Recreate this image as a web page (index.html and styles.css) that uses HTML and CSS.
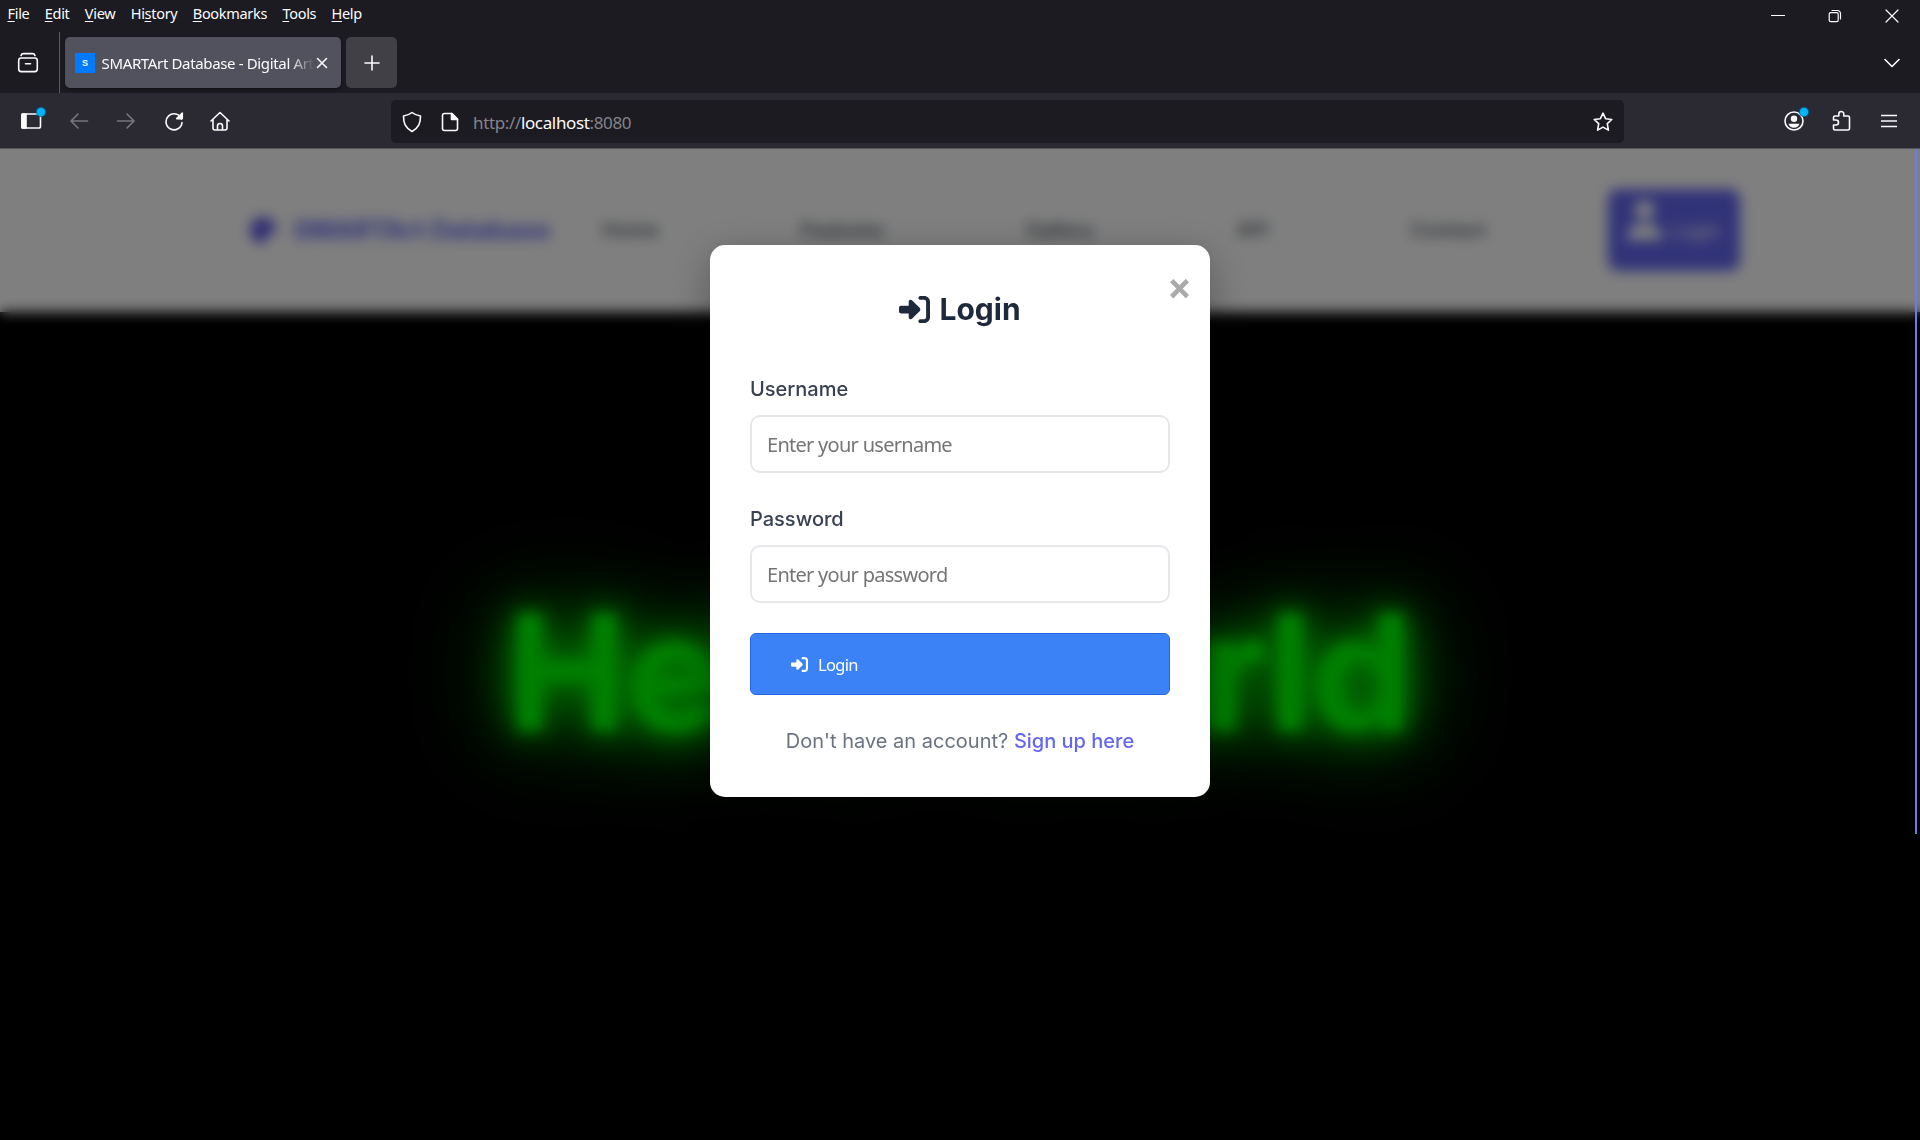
FILE: index.html
```html
<!DOCTYPE html>
<html lang="en">
<head>
<meta charset="utf-8">
<title>SMARTArt Database - Digital Art</title>
<link rel="stylesheet" href="styles.css">
</head>
<body>
<div class="window">
  <div class="menubar">
    <nav class="menus">
      <span><u>F</u>ile</span><span><u>E</u>dit</span><span><u>V</u>iew</span><span>Hi<u>s</u>tory</span><span><u>B</u>ookmarks</span><span><u>T</u>ools</span><span><u>H</u>elp</span>
    </nav>
    <div class="controls">
      <svg width="14" height="14" viewBox="0 0 14 14"><path d="M.5 6.5h13"/></svg>
      <svg width="14" height="14" viewBox="0 0 14 14"><rect x="1.2" y="3.7" width="9" height="9" rx="1.5"/><path d="M4 1.5h5.5a3 3 0 0 1 3 3V10"/></svg>
      <svg width="14" height="14" viewBox="0 0 14 14"><path d="M1 1l12 12M13 1L1 13"/></svg>
    </div>
  </div>
  <div class="tabstrip">
    <div class="archive"><svg width="22" height="22" viewBox="0 0 22 22"><path d="M4 3.5C4.500 2 5.200 1.600 6.500 1.600h9c1.300 0 2 .4 2.500 1.900"/><rect x="1.700" y="6" width="18.600" height="13.600" rx="2.600"/><path d="M8.500 11.700h5"/></svg></div>
    <div class="tab">
      <span class="favicon">S</span>
      <span class="tab-title">SMARTArt Database - Digital Art</span>
      <svg class="tab-close" width="12" height="12" viewBox="0 0 12 12"><path d="M1.500 1.500l9 9M10.500 1.500l-9 9"/></svg>
    </div>
    <div class="newtab"><svg width="16" height="16" viewBox="0 0 16 16"><path d="M8 1v14M1 8h14"/></svg></div>
    <svg class="alltabs" width="16" height="10" viewBox="0 0 16 10"><path d="M1 1.500l7 7 7-7"/></svg>
  </div>
  <div class="toolbar">
    <div class="tools">
      <div class="badged"><svg width="22" height="18" viewBox="0 0 22 18"><rect x="2" y="2" width="18.500" height="14" rx="1.800"/><path class="solid" d="M2 2h4v14H2z"/></svg><i class="dot"></i></div>
      <svg class="dim" width="20" height="18" viewBox="0 0 20 18"><path d="M18.500 9H2M9 2L2 9l7 7"/></svg>
      <svg class="dim" width="20" height="18" viewBox="0 0 20 18"><path d="M1.500 9H18M11 2l7 7-7 7"/></svg>
      <svg width="20" height="20" viewBox="0 0 20 20"><path d="M17.500 8A8 8 0 1 0 18 11.500"/><path class="solid" d="M18.300 2v5.600H12.700z"/></svg>
      <svg width="20" height="20" viewBox="0 0 20 20"><path d="M1 10l9-8.500 9 8.500M3 8.500V17q0 2 2 2h10q2 0 2-2V8.500M7.500 19v-4a2.500 2.500 0 0 1 5 0v4"/></svg>
    </div>
    <div class="urlbar">
      <svg width="20" height="22" viewBox="0 0 20 22"><path d="M10 1.500c2.500 2 5 3 8.500 3.500 0 7-1.500 11.500-8.500 15.500C3 16.500 1.500 12 1.500 5 5 4.500 7.500 3.500 10 1.500z"/></svg>
      <svg class="page-icon" width="18" height="20" viewBox="0 0 18 20"><path d="M3.500 1.500H11l5.500 5.500v9.500q0 2-2 2h-11q-2 0-2-2v-13q0-2 2-2z"/><path class="solid" d="M10.500 1.500v6h6z"/></svg>
      <span class="address">http://<b>localhost</b>:8080</span>
      <svg class="star" width="20" height="20" viewBox="0 0 20 20"><path d="M10 1.200l2.600 5.500 6.200.8-4.500 4.200 1.100 6.400-5.400-3-5.400 3 1.100-6.400L1.200 7.500l6.200-.8z"/></svg>
    </div>
    <div class="actions">
      <div class="badged"><svg width="20" height="20" viewBox="0 0 20 20"><circle cx="10" cy="10" r="9"/><circle class="fill" cx="10" cy="7.800" r="3.200"/><path class="fill" d="M4.500 12.700h11a5.800 5.800 0 0 1-11 0z"/></svg><i class="dot"></i></div>
      <svg width="20" height="22" viewBox="0 0 20 22"><path d="M6.800 6V4a2.500 2.500 0 0 1 5 0v2H16q1.500 0 1.500 1.500V18.500q0 1.500-1.500 1.500H3q-1.500 0-1.500-1.500V15H4a2.400 2.400 0 0 0 0-5H1.500V7.500Q1.500 6 3 6z"/></svg>
      <svg width="16" height="14" viewBox="0 0 16 14"><path d="M.5 1.500h15M.5 7h15M.5 12.500h15"/></svg>
    </div>
  </div>
  <main class="page">
    <header class="site-header">
      <div class="brand">
        <svg width="26" height="26" viewBox="0 0 512 512"><path d="M512 256c0 .9 0 1.800 0 2.700c-.4 36.500-33.600 61.300-70.100 61.300H344c-26.500 0-48 21.500-48 48c0 3.400 .4 6.700 1 9.900c2.100 10.200 6.500 20 10.800 29.900c6.100 13.800 12.100 27.500 12.100 42c0 31.800-21.600 60.700-53.400 62c-3.500 .1-7 .2-10.600 .2C114.600 512 0 397.400 0 256S114.600 0 256 0S512 114.600 512 256zM128 288a32 32 0 1 0-64 0 32 32 0 1 0 64 0zm0-96a32 32 0 1 0 0-64 32 32 0 1 0 0 64zM288 96a32 32 0 1 0-64 0 32 32 0 1 0 64 0zm96 96a32 32 0 1 0 0-64 32 32 0 1 0 0 64z"/></svg>
        <span>SMARTArt Database</span>
      </div>
      <nav class="links"><a>Home</a><a>Features</a><a>Gallery</a><a>API</a><a>Contact</a></nav>
      <div class="login-link"><svg width="35" height="40" viewBox="0 0 448 512"><path d="M224 256A128 128 0 1 0 224 0a128 128 0 1 0 0 256zm-45.700 48C79.800 304 0 383.800 0 482.300C0 498.700 13.300 512 29.700 512H418.300c16.400 0 29.700-13.300 29.700-29.700C448 383.800 368.200 304 269.700 304H178.300z"/></svg><span>Login</span></div>
    </header>
    <section class="hero"><h1>Hello World</h1></section>
    <div class="overlay">
      <form class="modal">
        <span class="close">×</span>
        <h2><svg width="31" height="31" viewBox="0 0 512 512"><path d="M217.900 105.900L340.700 228.700c7.200 7.200 11.300 17.100 11.300 27.300s-4.100 20.100-11.300 27.300L217.900 406.100c-6.400 6.400-15 9.900-24 9.900c-18.700 0-33.900-15.200-33.900-33.900l0-62.100L32 320c-17.700 0-32-14.300-32-32l0-64c0-17.700 14.300-32 32-32l128 0 0-62.100c0-18.700 15.200-33.900 33.900-33.900c9 0 17.600 3.600 24 9.900zM352 416l64 0c17.700 0 32-14.300 32-32l0-256c0-17.700-14.300-32-32-32l-64 0c-17.700 0-32-14.300-32-32s14.300-32 32-32l64 0c53 0 96 43 96 96l0 256c0 53-43 96-96 96l-64 0c-17.700 0-32-14.300-32-32s14.300-32 32-32z"/></svg><span>Login</span></h2>
        <label for="user">Username</label>
        <input id="user" type="text" placeholder="Enter your username">
        <label for="pass">Password</label>
        <input id="pass" type="password" placeholder="Enter your password">
        <button type="button"><svg width="17" height="17" viewBox="0 0 512 512"><path d="M217.900 105.900L340.700 228.700c7.200 7.200 11.300 17.100 11.300 27.300s-4.100 20.100-11.300 27.300L217.900 406.100c-6.400 6.400-15 9.900-24 9.900c-18.700 0-33.900-15.200-33.900-33.900l0-62.100L32 320c-17.700 0-32-14.300-32-32l0-64c0-17.700 14.300-32 32-32l128 0 0-62.100c0-18.700 15.200-33.900 33.900-33.900c9 0 17.600 3.600 24 9.900zM352 416l64 0c17.700 0 32-14.300 32-32l0-256c0-17.700-14.300-32-32-32l-64 0c-17.700 0-32-14.300-32-32s14.300-32 32-32l64 0c53 0 96 43 96 96l0 256c0 53-43 96-96 96l-64 0c-17.700 0-32-14.300-32-32s14.300-32 32-32z"/></svg><span>Login</span></button>
        <p>Don't have an account? <a>Sign up here</a></p>
      </form>
    </div>
    <div class="scroll-thumb"></div>
  </main>
</div>
</body>
</html>
```
FILE: styles.css
```css
* { box-sizing: border-box; }
body { margin: 0; background: #000; font-family: Inter, sans-serif; overflow: hidden; }
svg { display: block; flex: none; }

.window { width: 1920px; height: 1140px; display: flex; flex-direction: column; overflow: hidden; }
.menubar, .tabstrip, .toolbar { color: #fbfbfe; font-family: "Noto Sans", sans-serif; display: flex; flex: none; }
.menubar svg, .tabstrip svg, .toolbar svg { fill: none; stroke: #fbfbfe; stroke-width: 1.6; stroke-linejoin: round; stroke-linecap: round; }
.solid { fill: #fbfbfe; }
.toolbar .fill { fill: #fbfbfe; stroke: none; }

.menubar { height: 32px; background: #1c1b22; justify-content: space-between; align-items: flex-start; }
.menus { display: flex; gap: 15.3px; padding-left: 7.5px; font-size: 14.5px; line-height: 26px; letter-spacing: -.3px; }
.menus u { text-underline-offset: 2px; }
.controls { display: flex; gap: 43px; padding: 9px 21px 0 0; }
.menubar .controls svg { stroke-width: 1.2; }

.tabstrip { height: 61px; background: #1c1b22; align-items: flex-start; }
.archive { width: 60px; height: 61px; border-right: 1px solid #5b5b63; padding: 20px 0 0 17px; }
.tab { width: 276px; height: 51px; margin: 5px 5px 0; padding: 0 13px 0 10px; background: #52525e; border-radius: 5px; display: flex; align-items: center; box-shadow: 0 1px 3px rgba(0,0,0,.5); }
.favicon { width: 20px; height: 20px; background: #007bff; font: bold 9px/20px "Liberation Sans", sans-serif; text-align: center; }
.tab-title { width: 214px; margin-left: 6.5px; font-size: 15px; letter-spacing: -.35px; white-space: nowrap; overflow: hidden; -webkit-mask-image: linear-gradient(90deg, #000 188px, transparent 212px); mask-image: linear-gradient(90deg, #000 188px, transparent 212px); }
.newtab { width: 51px; height: 51px; margin-top: 5px; background: #414046; border-radius: 5px; display: grid; place-items: center; }
.alltabs { margin: 26px 20px 0 auto; }

.toolbar { height: 56px; background: #2b2a33; border-bottom: 1px solid #55545c; }
.tools { width: 391px; padding: 0 0 0 20px; display: flex; align-items: center; gap: 27px; }
.tools svg:nth-child(4) { margin-left: 1px; margin-right: -1px; }
.badged { position: relative; top: .5px; }
.dot { position: absolute; width: 8px; height: 8px; right: -3px; top: -4px; border-radius: 50%; background: #00b3ff; box-shadow: 0 0 1px 1px #0a6a98; }
.actions .dot { right: -4px; top: -3px; }
.toolbar .dim { stroke: #77767e; }
.urlbar { width: 1233px; height: 43px; margin-top: 7px; padding: 0 11px; background: #1c1b22; border-radius: 5px; display: flex; align-items: center; }
.page-icon { margin: 0 14px 0 19px; }
.address { font-size: 17px; letter-spacing: -.36px; color: #85848a; margin-top: 2px; }
.address b { font-weight: 400; color: #fbfbfe; }
.star { margin-left: auto; }
.actions { margin-left: auto; padding-right: 23px; display: flex; align-items: center; gap: 28px; }
.actions svg:last-child { margin-left: 1px; }
.actions .badged svg { margin-left: 0; }

.page { position: relative; flex: 1; background: #000; overflow: hidden; }
.site-header { height: 163px; background: #fff; padding: 0 180px 2px 250px; display: flex; align-items: center; }
.brand { width: 352px; display: flex; align-items: center; gap: 17px; font-size: 25.8px; font-weight: 700; color: #6366f1; white-space: nowrap; }
.brand svg { fill: #4f46e5; }
.links { width: 884px; display: flex; justify-content: space-between; font-size: 20px; font-weight: 500; color: #4b5563; }
.login-link { width: 132px; height: 82px; margin: 1px 0 0 auto; padding: 11px 0 0 19px; background: #6366f1; border-radius: 10px; display: flex; gap: 8px; color: #fff; font-size: 19px; font-weight: 400; }
.login-link svg { fill: #fff; }
.login-link span { margin-top: 20px; }
.hero { height: 828px; }
.hero h1 { margin: 0; padding-top: 258px; text-align: center; font-size: 160px; line-height: 204px; font-weight: 700; color: #0f0; text-shadow: 0 0 25px #0f0, 0 0 50px #0f0, 0 0 100px #0f0; white-space: nowrap; }

.overlay { position: absolute; inset: 0; background: rgba(0,0,0,.5); -webkit-backdrop-filter: blur(6.25px); backdrop-filter: blur(6.25px); display: flex; justify-content: center; align-items: flex-start; padding-top: 96px; }
.modal { position: relative; width: 500px; height: 552px; padding: 40px; background: #fff; border-radius: 15px; box-shadow: 0 10px 40px rgba(0,0,0,.3); }
.close { position: absolute; right: 20px; top: 24px; font: bold 36px/40px "Liberation Sans", sans-serif; color: #aaa; -webkit-text-stroke: .6px #aaa; }
.modal h2 { margin: 0 0 44px; height: 48px; display: flex; justify-content: center; align-items: center; gap: 9px; font-size: 30px; font-weight: 700; color: #1e293b; }
.modal h2 svg { fill: #1e293b; }
.modal label { display: block; height: 38px; font-size: 20px; line-height: 24px; font-weight: 500; color: #374151; }
.modal input { display: block; width: 420px; height: 58px; margin-bottom: 34px; padding: 0 15px; border: 2px solid #e5e7eb; border-radius: 10px; font: 20px "Noto Sans", sans-serif; letter-spacing: -.72px; background: #fff; outline: 0; }
.modal input::placeholder { color: #757575; opacity: 1; }
.modal button { width: 420px; height: 62px; margin-top: -4px; padding: 0 40px; display: flex; align-items: center; gap: 10px; background: #3b82f6; border: 1px solid #2563eb; border-radius: 6px; color: #fff; font: 16.5px "Noto Sans", sans-serif; letter-spacing: -.7px; }
.modal button svg { fill: #fff; }
.modal p { margin: 34px 0 0; text-align: center; font-size: 20px; line-height: 24px; color: #6b7280; }
.modal p a { color: #6366f1; font-weight: 500; }
.scroll-thumb { position: absolute; top: 0; right: 3px; width: 2px; height: 685px; background: #667eea; }
```
